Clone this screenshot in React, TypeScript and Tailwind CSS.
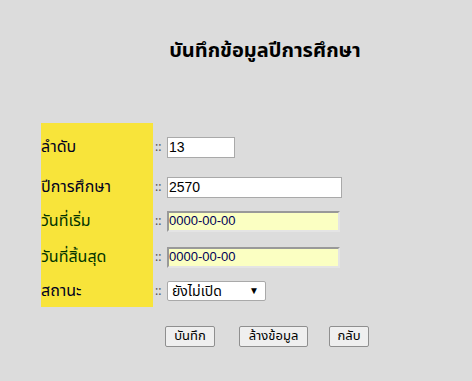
import React from "react";

const font = { fontFamily: "Tahoma, 'Noto Sans Thai', 'Noto Sans', 'Liberation Sans', sans-serif" };
const num = { fontFamily: "'Liberation Sans', Arial, sans-serif" };

export default function App() {
  return (
    <div className="w-[472px] h-[381px] bg-[#dcdcdc] relative overflow-hidden" style={font}>
      <div className="pt-[39px] pl-[41px]">
        <div className="w-[448px] text-center text-[20px] font-bold text-black leading-[24px]">
          บันทึกข้อมูลปีการศึกษา
        </div>
        <div className="mt-[60px] flex">
          <div className="w-[112px] bg-[#f8e43a] flex flex-col text-[16px] leading-[18px]">
            <div className="h-[48px] flex items-center text-[#000022]">ลำดับ</div>
            <div className="h-[32px] flex items-center text-[#000022]">ปีการศึกษา</div>
            <div className="h-[36px] flex items-center text-[#003300]">วันที่เริ่ม</div>
            <div className="h-[36px] flex items-center text-[#003300]">วันที่สิ้นสุด</div>
            <div className="h-[32px] flex items-center text-[#000022]">สถานะ</div>
          </div>
          <div className="flex flex-col pl-[2px]">
            <div className="h-[48px] flex items-center">
              <span className="text-[12px] text-[#555] w-[12px]">::</span>
              <div className="w-[68px] h-[21px] bg-white border border-[#a9a9a9] text-[14px] text-black flex items-center pl-[1px]" style={num}>13</div>
            </div>
            <div className="h-[32px] flex items-center">
              <span className="text-[12px] text-[#555] w-[12px]">::</span>
              <div className="w-[175px] h-[21px] bg-white border border-[#a9a9a9] text-[14px] text-black flex items-center pl-[1px]" style={num}>2570</div>
            </div>
            <div className="h-[36px] flex items-center">
              <span className="text-[12px] text-[#555] w-[12px]">::</span>
              <div className="w-[173px] h-[21px] bg-[#fbffc2] border-2 border-t-[#999] border-l-[#999] border-r-[#e4e4e4] border-b-[#e4e4e4] text-[13px] text-[#000055] flex items-center" style={num}>0000-00-00</div>
            </div>
            <div className="h-[36px] flex items-center">
              <span className="text-[12px] text-[#555] w-[12px]">::</span>
              <div className="w-[173px] h-[21px] bg-[#fbffc2] border-2 border-t-[#999] border-l-[#999] border-r-[#e4e4e4] border-b-[#e4e4e4] text-[13px] text-[#000055] flex items-center" style={num}>0000-00-00</div>
            </div>
            <div className="h-[32px] flex items-center">
              <span className="text-[12px] text-[#555] w-[12px]">::</span>
              <div className="w-[99px] h-[20px] bg-white border border-[#a9a9a9] rounded-[2px] text-[14px] text-black flex items-center justify-between pl-[4px] pr-[6px]">
                <span>ยังไม่เปิด</span>
                <span className="text-[10px]">▼</span>
              </div>
            </div>
          </div>
        </div>
        <div className="mt-[19px] flex pl-[124px] text-[13px] text-black">
          <div className="w-[50px] h-[21px] bg-[#efefef] border border-[#8f8f8f] rounded-[2px] flex items-center justify-center">บันทึก</div>
          <div className="ml-[24px] w-[69px] h-[21px] bg-[#efefef] border border-[#8f8f8f] rounded-[2px] flex items-center justify-center">ล้างข้อมูล</div>
          <div className="ml-[21px] w-[40px] h-[21px] bg-[#efefef] border border-[#8f8f8f] rounded-[2px] flex items-center justify-center">กลับ</div>
        </div>
      </div>
    </div>
  );
}
